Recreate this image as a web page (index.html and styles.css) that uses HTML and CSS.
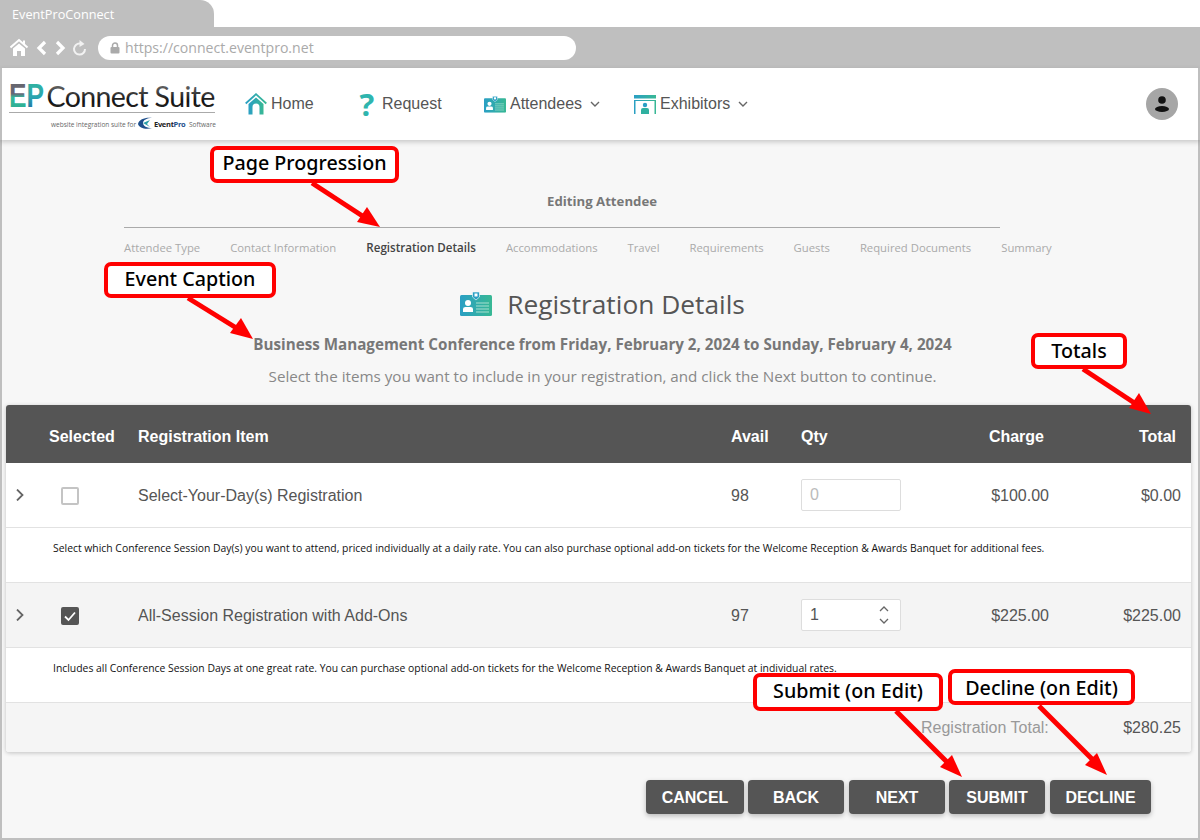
FILE: index.html
```html
<!DOCTYPE html>
<html lang="en">
<head>
<meta charset="utf-8">
<title>EventProConnect</title>
<link rel="stylesheet" href="styles.css">
</head>
<body>
<div class="frame">
  <div class="tabstrip"><div class="tab">EventProConnect</div></div>
  <div class="toolbar">
    <svg class="tool-icons" width="78" height="20" viewBox="0 0 78 20" aria-hidden="true">
      <path d="M0.500 9.500 L9 2 L17.500 9.500" fill="none" stroke="#fff" stroke-width="2"/>
      <path d="M13 2.500 H15 V6.500 L13 5 Z" fill="#fff"/>
      <path d="M9 5.500 L15 10.500 V18 H11 V13 H7 V18 H3 V10.500 Z" fill="#fff"/>
      <path d="M35 4 L29 10 L35 16" fill="none" stroke="#fff" stroke-width="3.200"/>
      <path d="M47 4 L53 10 L47 16" fill="none" stroke="#fff" stroke-width="3.200"/>
      <path d="M75 11 A5.500 5.500 0 1 1 70 5.600" fill="none" stroke="#f2f2f2" stroke-width="2"/>
      <path d="M69.500 2 L74.500 6 L69.500 9 Z" fill="#f2f2f2"/>
    </svg>
    <div class="address">
      <svg class="lock" width="10" height="12" viewBox="0 0 10 12" aria-hidden="true"><path d="M2.500 5 V3.500 A2.500 2.500 0 0 1 7.500 3.500 V5" fill="none" stroke="#aaa" stroke-width="1.500"/><rect x="0.500" y="5" width="9" height="6.500" rx="1" fill="#aaa"/></svg>
      <span>https://connect.eventpro.net</span>
    </div>
  </div>
  <header class="nav">
    <svg class="logo" width="218" height="64" viewBox="0 0 218 64">
      <defs>
        <linearGradient id="epg" x1="0" y1="0" x2="0" y2="1"><stop offset="0" stop-color="#666"/><stop offset="0.45" stop-color="#667"/><stop offset="0.55" stop-color="#35b99a"/><stop offset="1" stop-color="#2aa890"/></linearGradient>
        <linearGradient id="ppg" x1="0" y1="0" x2="0" y2="1"><stop offset="0" stop-color="#35b99a"/><stop offset="0.55" stop-color="#2aa4b0"/><stop offset="1" stop-color="#1d5c9c"/></linearGradient>
        <linearGradient id="cg" x1="0" y1="0" x2="0" y2="1"><stop offset="0" stop-color="#888"/><stop offset="0.65" stop-color="#111"/><stop offset="1" stop-color="#333"/></linearGradient>
      </defs>
      <text x="7" y="35" class="logo-ep" textLength="35" lengthAdjust="spacingAndGlyphs"><tspan fill="url(#epg)">E</tspan><tspan fill="url(#ppg)">P</tspan></text>
      <text x="44.500" y="35" class="logo-main" fill="url(#cg)">Connect Suite</text>
      <rect x="7" y="40" width="206" height="1" fill="#aaa"/>
      <text x="49" y="55" class="logo-sub">website integration suite for</text>
      <path d="M136 52 C137 47 144 45 150 46 C145 46 141 48 141 51 C141 54 145 56 150 56 C144 58 137 56 136 52 Z" fill="#1d4f8c"/>
      <path d="M141 51 L148 48 L145 52 L148 55 Z" fill="#2aa0a8"/>
      <text x="152" y="55" class="logo-ev">Event<tspan fill="#1d4f8c">Pro</tspan></text>
      <text x="187" y="55" class="logo-sub">Software</text>
    </svg>
    <nav class="menu">
      <a class="menu-item item-home">
        <svg width="22" height="22" viewBox="0 0 22 22" aria-hidden="true"><defs><linearGradient id="hg" x1="0" x2="1"><stop offset="0" stop-color="#2a9fc4"/><stop offset="1" stop-color="#38b894"/></linearGradient></defs><path d="M0.700 10.500 L11 1.200 L21.300 10.500" fill="none" stroke="url(#hg)" stroke-width="1.800"/><path d="M11 4.500 L18.500 11 V21.500 H14.500 V14 A3.500 3.500 0 0 0 7.500 14 V21.500 H3.500 V11 Z" fill="url(#hg)"/></svg>
        <span>Home</span>
      </a>
      <a class="menu-item item-request">
        <span class="qmark">?</span>
        <span>Request</span>
      </a>
      <a class="menu-item item-att">
        <svg width="22" height="17" viewBox="0 0 32 24" aria-hidden="true"><use href="#badge-shape"/></svg>
        <span>Attendees</span>
        <svg class="caret" width="10" height="7" viewBox="0 0 10 7" aria-hidden="true"><path d="M1 1 L5 5 L9 1" fill="none" stroke="#666" stroke-width="1.400"/></svg>
      </a>
      <a class="menu-item item-exh">
        <svg width="22" height="19" viewBox="0 0 22 19" aria-hidden="true"><defs><linearGradient id="xg" gradientUnits="userSpaceOnUse" x1="0" y1="0" x2="22" y2="0"><stop offset="0" stop-color="#2a9fc4"/><stop offset="1" stop-color="#38b894"/></linearGradient></defs><rect x="0" y="0" width="22" height="3.500" fill="url(#xg)"/><path d="M0 5 H22 V6 H1.500 V19 H0 Z M22 5 V19 H20.500 V6 Z" fill="url(#xg)"/><circle cx="11" cy="10" r="2.200" fill="#2a9fc4"/><path d="M7 19 V15 Q7 13 9 13 H13 Q15 13 15 15 V19 Z" fill="#2fb0a0"/></svg>
        <span>Exhibitors</span>
        <svg class="caret" width="10" height="7" viewBox="0 0 10 7" aria-hidden="true"><path d="M1 1 L5 5 L9 1" fill="none" stroke="#666" stroke-width="1.400"/></svg>
      </a>
    </nav>
    <div class="avatar">
      <svg width="16" height="18" viewBox="0 0 16 18" aria-hidden="true"><circle cx="8" cy="5" r="3.800" fill="#111"/><ellipse cx="8" cy="14" rx="7" ry="3" fill="#111"/></svg>
    </div>
  </header>

  <main class="content">
    <div class="editing">Editing Attendee</div>
    <div class="stepper">
      <div class="steps">
        <span>Attendee Type</span>
        <span>Contact Information</span>
        <span class="step-on">Registration Details</span>
        <span>Accommodations</span>
        <span>Travel</span>
        <span>Requirements</span>
        <span>Guests</span>
        <span>Required Documents</span>
        <span>Summary</span>
      </div>
    </div>
    <div class="title">
      <svg width="32" height="24" viewBox="0 0 32 24" aria-hidden="true">
        <symbol id="badge-shape" viewBox="0 0 32 24"><defs><linearGradient id="bg" x1="0" x2="1"><stop offset="0" stop-color="#2a9fc4"/><stop offset="1" stop-color="#38b894"/></linearGradient></defs><rect x="0" y="3" width="32" height="21" rx="1.500" fill="url(#bg)"/><path d="M12.500 0 H19.500 V5 L16 8 L12.500 5 Z" fill="#2a9fc4" stroke="#fff" stroke-width=".6"/><rect x="14.500" y="1.500" width="3" height="3" fill="#fff"/><circle cx="8" cy="11" r="3" fill="#fff"/><path d="M3 20 V17 Q3 15 5.500 15 H10.500 Q13 15 13 17 V20 Z" fill="#fff"/><path d="M16 11 H29 M16 14 H29 M16 17 H29 M16 20 H29" stroke="#a8e0d0" stroke-width="1"/></symbol>
        <use href="#badge-shape"/>
      </svg>
      <h1>Registration Details</h1>
    </div>
    <p class="caption">Business Management Conference from Friday, February 2, 2024 to Sunday, February 4, 2024</p>
    <p class="hint">Select the items you want to include in your registration, and click the Next button to continue.</p>

    <section class="table">
      <div class="grid head">
        <span></span>
        <span>Selected</span>
        <span>Registration Item</span>
        <span>Avail</span>
        <span>Qty</span>
        <span class="num">Charge</span>
        <span class="num">Total</span>
      </div>
      <div class="grid row">
        <svg class="expand" width="8" height="12" viewBox="0 0 8 12" aria-hidden="true"><path d="M1 .5 L6.500 6 L1 11.500" fill="none" stroke="#666" stroke-width="1.800"/></svg>
        <span class="check"></span>
        <span>Select-Your-Day(s) Registration</span>
        <span>98</span>
        <span class="qty qty-off">0</span>
        <span class="num2">$100.00</span>
        <span class="num2">$0.00</span>
      </div>
      <div class="desc">Select which Conference Session Day(s) you want to attend, priced individually at a daily rate. You can also purchase optional add-on tickets for the Welcome Reception &amp; Awards Banquet for additional fees.</div>
      <div class="grid row row-alt">
        <svg class="expand" width="8" height="12" viewBox="0 0 8 12" aria-hidden="true"><path d="M1 .5 L6.500 6 L1 11.500" fill="none" stroke="#666" stroke-width="1.800"/></svg>
        <span class="check check-on"><svg width="14" height="12" viewBox="0 0 14 12" aria-hidden="true"><path d="M2 6.500 L5.500 10 L12 2.500" fill="none" stroke="#fff" stroke-width="1.800"/></svg></span>
        <span>All-Session Registration with Add-Ons</span>
        <span>97</span>
        <span class="qty">1
          <svg class="spin" width="12" height="22" viewBox="0 0 12 22" aria-hidden="true"><path d="M2 7 L6 3 L10 7 M2 15 L6 19 L10 15" fill="none" stroke="#666" stroke-width="1.300"/></svg>
        </span>
        <span class="num2">$225.00</span>
        <span class="num2">$225.00</span>
      </div>
      <div class="desc">Includes all Conference Session Days at one great rate. You can purchase optional add-on tickets for the Welcome Reception &amp; Awards Banquet at individual rates.</div>
      <div class="total">
        <span class="total-label">Registration Total:</span>
        <span class="total-value">$280.25</span>
      </div>
    </section>

    <div class="actions">
      <button class="btn btn-cancel">Cancel</button>
      <button class="btn">Back</button>
      <button class="btn btn-next">Next</button>
      <button class="btn">Submit</button>
      <button class="btn btn-decline">Decline</button>
    </div>
  </main>

  <svg class="arrows" width="1200" height="840" viewBox="0 0 1200 840" aria-hidden="true">
    <g fill="none" stroke="#f00" stroke-width="5">
      <path d="M312 183 L364 217"/>
      <path d="M188 298 L238 329"/>
      <path d="M1083 369 L1136 404"/>
      <path d="M896 711 L950 765"/>
      <path d="M1039 706 L1093 760"/>
    </g>
    <g fill="#f00">
      <path d="M380 227 L357 222 L367 207 Z"/>
      <path d="M253 339 L230 333 L241 318 Z"/>
      <path d="M1151 414 L1129 408 L1139 393 Z"/>
      <path d="M962 777 L940 767 L952 755 Z"/>
      <path d="M1107 775 L1085 765 L1097 753 Z"/>
    </g>
  </svg>
  <div class="note note-page">Page Progression</div>
  <div class="note note-event">Event Caption</div>
  <div class="note note-totals">Totals</div>
  <div class="note note-submit">Submit (on Edit)</div>
  <div class="note note-decline">Decline (on Edit)</div>
</div>
</body>
</html>
```
FILE: styles.css
```css
* { box-sizing: border-box; }
html, body { margin: 0; padding: 0; }
body { width: 1200px; height: 840px; overflow: hidden; background: #fff; font-family: "Liberation Sans", Arial, sans-serif; }
.frame { position: relative; width: 1200px; height: 840px; overflow: hidden; display: flex; flex-direction: column; }

.tabstrip { height: 27px; background: #fff; flex: none; }
.tab { width: 214px; height: 27px; background: #bfbfbf; border-top-right-radius: 14px; color: #fff; font: 12.700px/29px "Open Sans", sans-serif; padding-left: 12px; }
.toolbar { height: 41px; flex: none; background: #bfbfbf; display: flex; align-items: center; padding: 0 0 0 10px; }
.tool-icons { margin-right: 10px; flex: none; }
.address { width: 478px; height: 24px; border-radius: 12px; background: #fff; display: flex; align-items: center; gap: 5px; padding-left: 12px; color: #aaa; font: 14.100px "Open Sans", sans-serif; }

.nav { height: 72px; flex: none; background: #fff; border: solid #bfbfbf; border-width: 0 2px; display: flex; align-items: center; box-shadow: 0 2px 5px rgba(0,0,0,.2); position: relative; z-index: 1; }
.logo { flex: none; }
.logo-ep { font: bold 33px "Liberation Sans", sans-serif; }
.logo-main { font: 28.500px "Lato", sans-serif; letter-spacing: -.6px; }
.logo-sub { font: 6.500px "Open Sans", sans-serif; fill: #666; }
.logo-ev { font: bold 7.500px "Open Sans", sans-serif; fill: #222; letter-spacing: -.3px; }

.menu { display: flex; align-items: center; margin-left: 25px; color: #555; font-size: 16px; flex: 1; }
.menu-item { display: flex; align-items: center; gap: 4px; }
.item-home { width: 113px; }
.item-request { width: 126px; gap: 6px; }
.item-att { width: 150px; }
.caret { margin-left: 4px; }
.qmark { color: #2fb5ae; font: bold 31px/24px "Open Sans", sans-serif; width: 18px; text-align: center; }
.avatar { width: 32px; height: 32px; border-radius: 50%; background: #a6a6a6; display: flex; align-items: center; justify-content: center; margin-right: 20px; }

.content { flex: 1; background: #f7f7f7; border: solid #bfbfbf; border-width: 0 2px 2px; padding: 0 7px 0 4px; display: flex; flex-direction: column; min-height: 0; }
.editing { margin-top: 52px; height: 18px; text-align: center; font: bold 13.200px/18px "Open Sans", sans-serif; color: #777; padding-left: 7px; }
.stepper { margin: 17px 0 0 118px; width: 876px; border-top: 1px solid #aaa; }
.steps { display: flex; gap: 30px; white-space: nowrap; padding-top: 12px; font: 11.300px/16px "Open Sans", sans-serif; color: #aaa; }
.step-on { color: #444; font-weight: 600; font-size: 11.600px; }
.title { display: flex; align-items: center; justify-content: center; gap: 15px; margin-top: 29px; height: 38px; padding-left: 8px; }
.title h1 { margin: 0; font: 400 26.300px/38px "Open Sans", sans-serif; color: #555; }
.caption { margin: 11px 0 0; text-align: center; font: bold 15.200px/20px "Open Sans", sans-serif; color: #777; padding-left: 8px; }
.hint { margin: 12px 0 0; text-align: center; font: 15.200px/20px "Open Sans", sans-serif; color: #888; padding-left: 8px; }

.table { margin-top: 19px; height: 347px; background: #fff; border-radius: 3px; box-shadow: 0 1px 4px rgba(0,0,0,.22); overflow: hidden; flex: none; display: flex; flex-direction: column; }
.grid { display: grid; grid-template-columns: 43px 89px 593px 70px 100px 148px 132px; align-items: center; padding-right: 10px; flex: none; }
.head { height: 58px; padding-top: 5px; background: #555; color: #fff; font-weight: bold; font-size: 16px; }
.num { text-align: right; padding-right: 5px; }
.row { height: 65px; padding-top: 2px; color: #555; font-size: 16px; border-bottom: 1px solid #e2e2e2; }
.row-alt { background: #f4f4f4; }
.num2 { text-align: right; }
.expand { margin-left: 10px; margin-top: -2px; }
.check { width: 18px; height: 18px; margin-left: 12px; border: 2px solid #c4c4c4; border-radius: 2px; background: #fff; display: flex; align-items: center; justify-content: center; }
.check-on { background: #555; border-color: #555; }
.qty { height: 32px; width: 100px; margin-top: -2px; border: 1px solid #ddd; border-radius: 2px; background: #fff; padding: 0 10px 0 8px; display: flex; align-items: center; justify-content: space-between; }
.qty-off { color: #bbb; }
.desc { height: 55px; flex: none; padding: 12px 0 0 47px; font: 10.390px/16px "Open Sans", sans-serif; color: #111; border-bottom: 1px solid #e2e2e2; background: #fff; white-space: nowrap; }
.total { flex: 1; background: #f5f5f5; display: flex; align-items: center; justify-content: flex-end; padding-right: 10px; font-size: 16px; }
.total-label { color: #999; width: 128px; margin-right: 4px; }
.total-value { color: #555; width: 128px; text-align: right; }

.actions { display: flex; gap: 4px; margin: 28px 0 0 640px; }
.btn { width: 96px; height: 34px; border: 0; border-radius: 4px; padding: 2px 0 0; background: #555; color: #fff; font: bold 16px "Liberation Sans", sans-serif; text-transform: uppercase; box-shadow: 0 2px 5px rgba(0,0,0,.25); }
.btn-cancel { width: 98px; }
.btn-next { margin-left: 1px; }
.btn-decline { width: 101px; margin-left: 1px; }

.arrows { position: absolute; left: 0; top: 0; z-index: 2; pointer-events: none; }
.note { position: absolute; z-index: 3; background: #fff; border: 4px solid #f00; border-radius: 7px; color: #000; font: 500 19.700px/1 "Noto Sans", "Open Sans", sans-serif; display: flex; align-items: center; justify-content: center; white-space: nowrap; }
.note-page { left: 210px; top: 146px; width: 189px; height: 37px; padding-bottom: 4px; }
.note-event { left: 104px; top: 262px; width: 172px; height: 36px; padding-bottom: 2px; }
.note-totals { left: 1031px; top: 333px; width: 96px; height: 36px; }
.note-submit { left: 753px; top: 673px; width: 190px; height: 38px; padding-bottom: 2px; }
.note-decline { left: 948px; top: 669px; width: 187px; height: 36px; padding-top: 2px; }
```
